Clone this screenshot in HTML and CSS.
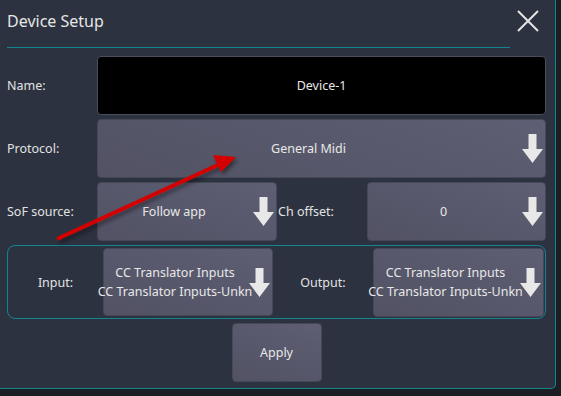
FILE: index.html
```html
<!DOCTYPE html>
<html lang="en">
<head>
    <meta charset="UTF-8">
    <meta name="viewport" content="width=device-width, initial-scale=1.0">
    <title>Device Setup</title>
    <link rel="stylesheet" href="styles.css">
</head>
<body>
    <div class="dialog">
        <div class="header">
            <span class="title">Device Setup</span>
            <svg class="close" width="22" height="22" viewBox="0 0 22 22">
                <path d="M1 1 L21 21 M21 1 L1 21" stroke="#e4e4e4" stroke-width="2" fill="none"/>
            </svg>
        </div>
        <div class="rule"></div>

        <div class="form">
            <div class="row">
                <div class="label">Name:</div>
                <div class="field name-field">Device-1</div>
            </div>
            <div class="row">
                <div class="label">Protocol:</div>
                <div class="field combo">
                    <div class="combo-text">General Midi</div>
                    <svg class="down" width="21" height="29" viewBox="0 0 21 29"><path d="M6.5 0 H14.5 V15 H21 L10.5 29 L0 15 H6.5 Z" fill="#e8e8e8"/></svg>
                </div>
            </div>
            <div class="row">
                <div class="label">SoF source:</div>
                <div class="field combo sof">
                    <div class="combo-text">Follow app</div>
                    <svg class="down" width="21" height="29" viewBox="0 0 21 29"><path d="M6.5 0 H14.5 V15 H21 L10.5 29 L0 15 H6.5 Z" fill="#e8e8e8"/></svg>
                </div>
                <div class="label ch-label">Ch offset:</div>
                <div class="field combo">
                    <div class="combo-text">0</div>
                    <svg class="down" width="21" height="29" viewBox="0 0 21 29"><path d="M6.5 0 H14.5 V15 H21 L10.5 29 L0 15 H6.5 Z" fill="#e8e8e8"/></svg>
                </div>
            </div>

            <div class="group">
                <div class="group-label in-label">Input:</div>
                <div class="field combo port in-port">
                    <div class="combo-text">
                        <span>CC Translator Inputs</span>
                        <span>CC Translator Inputs-Unkn</span>
                    </div>
                    <svg class="down" width="21" height="29" viewBox="0 0 21 29"><path d="M6.5 0 H14.5 V15 H21 L10.5 29 L0 15 H6.5 Z" fill="#e8e8e8"/></svg>
                </div>
                <div class="group-label out-label">Output:</div>
                <div class="field combo port out-port">
                    <div class="combo-text">
                        <span>CC Translator Inputs</span>
                        <span>CC Translator Inputs-Unkn</span>
                    </div>
                    <svg class="down" width="21" height="29" viewBox="0 0 21 29"><path d="M6.5 0 H14.5 V15 H21 L10.5 29 L0 15 H6.5 Z" fill="#e8e8e8"/></svg>
                </div>
            </div>

            <div class="field apply">Apply</div>
        </div>

        <!-- annotation arrow drawn over the dialog -->
        <svg class="pointer" width="561" height="396" viewBox="0 0 561 396">
            <defs>
                <filter id="shade" x="-20%" y="-20%" width="140%" height="140%">
                    <feDropShadow dx="2" dy="3" stdDeviation="2" flood-color="#000" flood-opacity="0.45"/>
                </filter>
            </defs>
            <g filter="url(#shade)">
                <line x1="57" y1="239" x2="220" y2="164" stroke="#d40000" stroke-width="4"/>
                <path d="M236 157 L213 155 L221 172 Z" fill="#d40000"/>
            </g>
        </svg>
    </div>
</body>
</html>
```

FILE: styles.css
```css
body {
    margin: 0;
    background-color: #1b1e23;
    font-family: "Noto Sans", "Open Sans", sans-serif;
    color: #e2e2e2;
}
.dialog {
    position: relative;
    width: 556px;
    height: 389px;
    box-sizing: border-box;
    background-color: #2c3240;
    border-right: 1px solid #13858f;
    border-bottom: 1px solid #13858f;
    border-bottom-right-radius: 5px;
}
.header {
    height: 42px;
    display: flex;
    align-items: center;
    justify-content: space-between;
    padding: 0 16px 0 7px;
}
.title {
    font-size: 16px;
    color: #e6e6e6;
}
.rule {
    margin: 5px 0 0 7px;
    width: 503px;
    height: 1px;
    background-color: #13858f;
}
.form {
    padding: 8px 9px 0 7px;
}
.row {
    display: flex;
    height: 59px;
    margin-bottom: 4px;
}
.label {
    width: 90px;
    flex: none;
    display: flex;
    align-items: center;
    font-size: 12.5px;
}
.ch-label {
    padding-left: 1px;
    box-sizing: border-box;
}
.field {
    box-sizing: border-box;
    border-radius: 4px;
    font-size: 12.5px;
    color: #e8e8e8;
    display: flex;
    align-items: center;
}
.name-field {
    flex: 1;
    justify-content: center;
    background-color: #000;
    border: 1px solid #4a4e5a;
}
.combo {
    flex: 1;
    min-width: 0;
    background: linear-gradient(20deg, #525264, #5e5e74);
    border: 1px solid #464858;
}
.sof {
    flex: none;
    width: 180px;
}
.combo-text {
    flex: 1;
    min-width: 0;
    display: flex;
    flex-direction: column;
    align-items: center;
    white-space: nowrap;
    line-height: 19px;
}
.down {
    flex: none;
    margin: 0 2px 0 3px;
}
.group {
    display: flex;
    align-items: center;
    height: 74px;
    box-sizing: border-box;
    border: 1px solid #13858f;
    border-radius: 8px;
}
.group-label {
    flex: none;
    text-align: center;
    font-size: 12.5px;
}
.in-label {
    width: 95px;
}
.out-label {
    width: 100px;
}
.port {
    flex: none;
    height: 68px;
}
.in-port {
    width: 170px;
}
.out-port {
    width: 171px;
    height: 69px;
}
.apply {
    width: 90px;
    height: 59px;
    margin: 4px auto 0;
    justify-content: center;
    background: linear-gradient(20deg, #525264, #5e5e74);
    border: 1px solid #464858;
}
.pointer {
    position: absolute;
    left: 0;
    top: 0;
    pointer-events: none;
}
```
